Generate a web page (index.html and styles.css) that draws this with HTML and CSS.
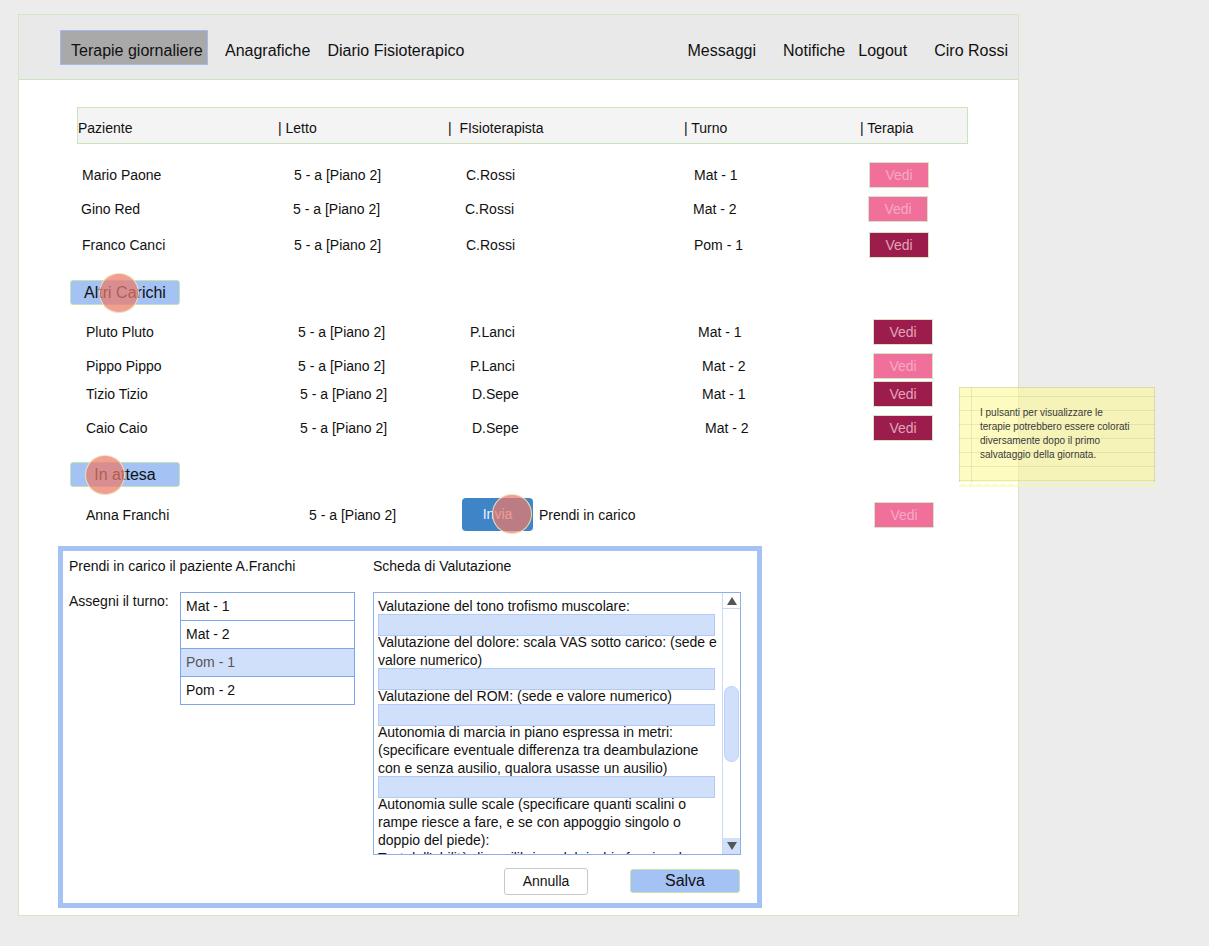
FILE: index.html
```html
<!DOCTYPE html>
<html lang="it">
<head>
<meta charset="utf-8">
<title>Terapie giornaliere</title>
<link rel="stylesheet" href="styles.css">
</head>
<body>
<div class="page">
  <header class="topbar">
    <nav class="nav">
      <a class="nav-item is-active">Terapie giornaliere</a>
      <a class="nav-item">Anagrafiche</a>
      <a class="nav-item">Diario Fisioterapico</a>
    </nav>
    <nav class="nav nav-right">
      <a class="nav-item">Messaggi</a>
      <a class="nav-item nav-notif">Notifiche</a>
      <a class="nav-item nav-logout">Logout</a>
      <a class="nav-item nav-user">Ciro Rossi</a>
    </nav>
  </header>

  <main class="content">
    <div class="thead">
      <span class="th-first">Paziente</span><span>| Letto</span><span>|  FIsioterapista</span><span>| Turno</span><span>| Terapia</span>
    </div>

    <section class="group group-own">
      <div class="row">
        <span>Mario Paone</span><span>5 - a [Piano 2]</span><span>C.Rossi</span><span>Mat - 1</span><span class="vedi vedi-new">Vedi</span>
      </div>
      <div class="row row-shift">
        <span>Gino Red</span><span>5 - a [Piano 2]</span><span>C.Rossi</span><span>Mat - 2</span><span class="vedi vedi-new">Vedi</span>
      </div>
      <div class="row gap-10">
        <span>Franco Canci</span><span>5 - a [Piano 2]</span><span>C.Rossi</span><span>Pom - 1</span><span class="vedi vedi-done">Vedi</span>
      </div>
    </section>

    <div class="pill pill-altri">Altri Carichi<span class="tap tap-altri"></span></div>

    <section class="group group-other">
      <div class="row">
        <span>Pluto Pluto</span><span>5 - a [Piano 2]</span><span>P.Lanci</span><span>Mat - 1</span><span class="vedi vedi-done">Vedi</span>
      </div>
      <div class="row">
        <span>Pippo Pippo</span><span>5 - a [Piano 2]</span><span>P.Lanci</span><span class="nudge">Mat - 2</span><span class="vedi vedi-new">Vedi</span>
      </div>
      <div class="row gap-2">
        <span>Tizio Tizio</span><span class="nudge-s">5 - a [Piano 2]</span><span class="nudge-s">D.Sepe</span><span class="nudge">Mat - 1</span><span class="vedi vedi-done">Vedi</span>
      </div>
      <div class="row">
        <span>Caio Caio</span><span class="nudge-s">5 - a [Piano 2]</span><span class="nudge-s">D.Sepe</span><span class="nudge-l">Mat - 2</span><span class="vedi vedi-done">Vedi</span>
      </div>
    </section>

    <div class="pill pill-attesa">In attesa<span class="tap tap-attesa"></span></div>

    <div class="row-wait">
      <span>Anna Franchi</span>
      <span>5 - a [Piano 2]</span>
      <span class="invia">Invia<span class="tap tap-invia"></span></span>
      <span>Prendi in carico</span>
      <span class="vedi vedi-new">Vedi</span>
    </div>

    <section class="dialog">
      <div class="dlg-grid">
        <div class="dlg-title">Prendi in carico il paziente A.Franchi</div>
        <div class="dlg-title">Scheda di Valutazione</div>

        <div class="turno">
          <div class="turno-label">Assegni il turno:</div>
          <ul class="list">
            <li class="list-item">Mat - 1</li>
            <li class="list-item">Mat - 2</li>
            <li class="list-item is-selected">Pom - 1</li>
            <li class="list-item">Pom - 2</li>
          </ul>
        </div>

        <div class="scheda">
          <div class="scheda-body">
            <p class="lbl">Valutazione del tono trofismo muscolare:</p>
            <div class="field"></div>
            <p class="lbl">Valutazione del dolore: scala VAS sotto carico: (sede e valore numerico)</p>
            <div class="field"></div>
            <p class="lbl">Valutazione del ROM: (sede e valore numerico)</p>
            <div class="field"></div>
            <p class="lbl">Autonomia di marcia in piano espressa in metri: (specificare eventuale differenza tra deambulazione con e senza ausilio, qualora usasse un ausilio)</p>
            <div class="field"></div>
            <p class="lbl">Autonomia sulle scale (specificare quanti scalini o rampe riesce a fare, e se con appoggio singolo o doppio del piede):</p>
            <p class="lbl">Test dell'abilità di equilibrio e del rischio funzionale</p>
          </div>
          <div class="scrollbar">
            <div class="sb-btn sb-up"><svg width="10" height="8" viewBox="0 0 10 8"><polygon points="0,8 5,0 10,8" fill="#555"/></svg></div>
            <div class="sb-track"><div class="sb-thumb"></div></div>
            <div class="sb-btn sb-down"><svg width="10" height="8" viewBox="0 0 10 8"><polygon points="0,0 10,0 5,8" fill="#555"/></svg></div>
          </div>
        </div>
      </div>
      <div class="dlg-foot">
        <span class="btn btn-cancel">Annulla</span>
        <span class="btn btn-save">Salva</span>
      </div>
    </section>
  </main>
</div>

<aside class="note">I pulsanti per visualizzare le<br>terapie potrebbero essere colorati<br>diversamente dopo il primo<br>salvataggio della giornata.</aside>
</body>
</html>
```

FILE: styles.css
```css
* { box-sizing: border-box; }
html, body { margin: 0; padding: 0; }
body {
  width: 1209px;
  height: 946px;
  overflow: hidden;
  position: relative;
  background: #ececec;
  font-family: "Liberation Sans", Arial, sans-serif;
  color: #111;
}

.page {
  margin: 14px 0 0 18px;
  width: 1001px;
  height: 902px;
  background: #fff;
  border: 1px solid #d3e6c6;
}

/* top bar */
.topbar {
  display: flex;
  height: 65px;
  background: #e9e9e9;
  border-bottom: 1px solid #cde5bd;
  padding: 15px 10px 0 41px;
  font-size: 16px;
}
.nav { display: flex; gap: 17px; }
.nav-right { margin-left: auto; gap: 0; }
.nav-item {
  display: block;
  height: 35px;
  padding-top: 11px;
  line-height: 19px;
  white-space: nowrap;
  color: #111;
}
.nav-item.is-active {
  width: 148px;
  background: #a9a9a9;
  border: 1px solid #9fbcec;
  padding: 10px 0 0 10px;
}
.nav-notif { margin-left: 27px; }
.nav-logout { margin-left: 13px; }
.nav-user { margin-left: 27px; }

/* content */
.content {
  padding: 27px 0 0 39px;
  font-size: 14px;
}
.thead {
  margin-left: 19px;
  width: 891px;
  height: 37px;
  background: #f5f4f4;
  border: 1px solid #c9e4b6;
  display: grid;
  grid-template-columns: 200px 170px 236px 176px 1fr;
  padding-top: 12px;
  line-height: 16px;
  white-space: pre;
}

.group-own { margin: 18px 0 0 24px; }
.group-other { margin: 14px 0 0 28px; }

.row {
  display: grid;
  grid-template-columns: 212px 172px 228px 175px 60px;
  align-items: center;
  height: 26px;
  line-height: 16px;
  white-space: nowrap;
}
.row + .row { margin-top: 8px; }
.row.gap-10 { margin-top: 10px; }
.row.gap-2 { margin-top: 2px; }
.row-shift { margin-left: -1px; }
.nudge { padding-left: 4px; }
.nudge-s { padding-left: 2px; }
.nudge-l { padding-left: 7px; }

.vedi {
  display: block;
  width: 60px;
  height: 26px;
  line-height: 24px;
  text-align: center;
  border: 1px solid #d5e4c6;
}
.vedi-new { background: #f0709b; color: #f6a9c5; }
.vedi-done { background: #9c1c4b; color: #e2a4bb; }

.pill {
  position: relative;
  width: 110px;
  height: 25px;
  margin-left: 12px;
  background: #a4c2f4;
  border: 1px solid #c5e3b3;
  border-radius: 3px;
  font-size: 16px;
  line-height: 23px;
  text-align: center;
  color: #111;
}
.pill-altri { margin-top: 22px; }
.pill-attesa { margin-top: 21px; }

.tap {
  position: absolute;
  width: 40px;
  height: 40px;
  border-radius: 50%;
  background: rgba(236, 122, 106, 0.72);
  border: 1px solid rgba(238, 228, 188, 0.95);
}
.tap-altri { left: 28px; top: -8px; }
.tap-attesa { left: 14px; top: -8px; }
.tap-invia { left: 30px; top: -4px; }

.row-wait {
  display: grid;
  grid-template-columns: 223px 153px 77px 335px 60px;
  align-items: center;
  height: 33px;
  margin: 11px 0 0 28px;
  white-space: nowrap;
}
.invia {
  position: relative;
  display: block;
  width: 71px;
  height: 33px;
  line-height: 33px;
  text-align: center;
  background: #3d85c6;
  border-radius: 4px;
  color: #eef3fa;
}

/* dialog */
.dialog {
  margin-top: 15px;
  width: 704px;
  height: 362px;
  border: 5px solid #a4c2f4;
  background: #fff;
  padding: 7px 16px 0 6px;
}
.dlg-grid {
  display: grid;
  grid-template-columns: 304px 368px;
  grid-template-rows: 16px 263px;
  row-gap: 18px;
}
.dlg-title { line-height: 16px; white-space: nowrap; }

.turno { display: flex; align-items: flex-start; }
.turno-label { width: 111px; padding-top: 1px; line-height: 16px; }
.list {
  list-style: none;
  margin: 0;
  padding: 0;
  width: 175px;
  border: 1px solid #7da6ee;
}
.list-item {
  height: 28px;
  line-height: 27px;
  padding-left: 5px;
  border-bottom: 1px solid #7da6ee;
}
.list-item:last-child { height: 27px; border-bottom: 0; }
.list-item.is-selected { background: #d0e0fb; color: #555; }

.scheda {
  display: flex;
  width: 368px;
  height: 263px;
  border: 1px solid #8eaeea;
}
.scheda-body {
  flex: 1;
  overflow: hidden;
  padding: 4px 0 0 4px;
  line-height: 18px;
}
.lbl { margin: 0; }
.field {
  width: 337px;
  height: 22px;
  margin: -1px 0 -3px;
  background: #d0e0fb;
  border: 1px solid #b1cbf6;
}
.scrollbar {
  width: 18px;
  display: flex;
  flex-direction: column;
  border-left: 1px solid #c9daf8;
}
.sb-btn {
  height: 16px;
  display: flex;
  align-items: center;
  justify-content: center;
}
.sb-up { background: #fff; border-bottom: 1px solid #c9daf8; }
.sb-down { background: #d0e0fb; }
.sb-track { flex: 1; padding: 0 1px; }
.sb-thumb {
  margin-top: 77px;
  height: 76px;
  background: #d0e0fb;
  border: 1px solid #bdd2f6;
  border-radius: 8px;
}

.dlg-foot {
  display: flex;
  justify-content: flex-end;
  align-items: flex-start;
  gap: 42px;
  margin-top: 13px;
  padding-right: 1px;
}
.btn { display: block; text-align: center; border-radius: 3px; }
.btn-cancel {
  width: 84px;
  height: 27px;
  line-height: 25px;
  background: #fff;
  border: 1px solid #c9c9c9;
  font-size: 14px;
}
.btn-save {
  width: 110px;
  height: 24px;
  margin-top: 1px;
  line-height: 22px;
  background: #a4c2f4;
  border: 1px solid #c8e2b4;
  font-size: 16px;
}

/* sticky note annotation */
.note {
  position: absolute;
  left: 959px;
  top: 387px;
  width: 196px;
  height: 95px;
  padding: 18px 0 0 20px;
  font-size: 10px;
  line-height: 14px;
  color: #3a3a3a;
  white-space: nowrap;
  border: 1px solid rgba(0, 0, 0, 0.1);
  border-bottom: 0;
  background:
    linear-gradient(to right, transparent 11px, rgba(120, 120, 90, 0.14) 11px 12px, transparent 12px),
    repeating-linear-gradient(to bottom, transparent 0 8px, rgba(120, 120, 90, 0.14) 8px 9px, transparent 9px 14px),
    rgba(252, 248, 150, 0.6);
}
.note::after {
  content: "";
  position: absolute;
  left: -1px;
  right: -1px;
  top: 100%;
  height: 5px;
  background: conic-gradient(from 135deg at 50% 0, rgba(252, 248, 150, 0.6) 0 90deg, transparent 0) 0 0 / 8px 5px;
}
```
